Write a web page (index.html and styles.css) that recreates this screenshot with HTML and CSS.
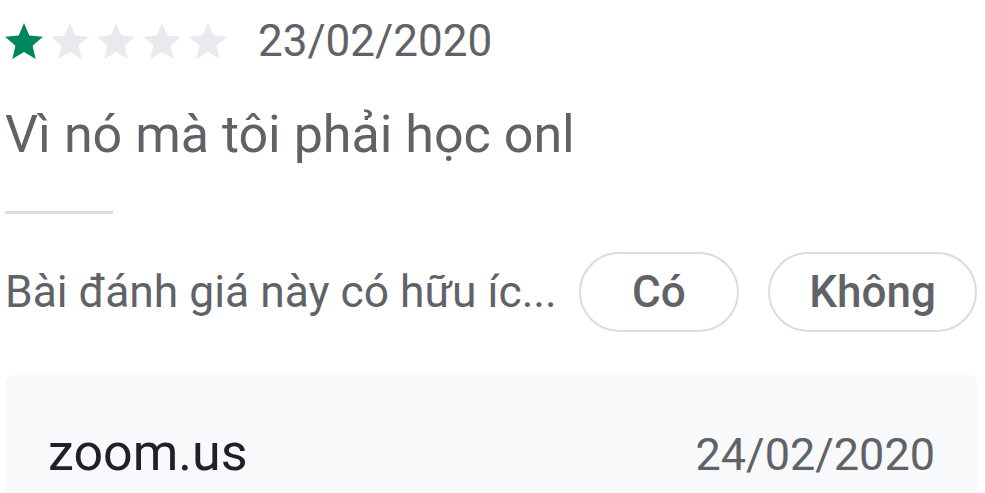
FILE: index.html
```html
<!DOCTYPE html>
<html lang="vi">
<head>
    <meta charset="UTF-8">
    <meta name="viewport" content="width=device-width, initial-scale=1.0">
    <title>Đánh giá</title>
    <link rel="stylesheet" href="styles.css">
</head>
<body>
    <div class="review">
        <div class="review-meta">
            <div class="stars">
                <svg class="star star-on" viewBox="2 2 20 19"><path d="M12 17.27L18.18 21l-1.64-7.03L22 9.24l-7.19-.61L12 2 9.19 8.63 2 9.24l5.46 4.73L5.82 21z"/></svg>
                <svg class="star" viewBox="2 2 20 19"><path d="M12 17.27L18.18 21l-1.64-7.03L22 9.24l-7.19-.61L12 2 9.19 8.63 2 9.24l5.46 4.73L5.82 21z"/></svg>
                <svg class="star" viewBox="2 2 20 19"><path d="M12 17.27L18.18 21l-1.64-7.03L22 9.24l-7.19-.61L12 2 9.19 8.63 2 9.24l5.46 4.73L5.82 21z"/></svg>
                <svg class="star" viewBox="2 2 20 19"><path d="M12 17.27L18.18 21l-1.64-7.03L22 9.24l-7.19-.61L12 2 9.19 8.63 2 9.24l5.46 4.73L5.82 21z"/></svg>
                <svg class="star" viewBox="2 2 20 19"><path d="M12 17.27L18.18 21l-1.64-7.03L22 9.24l-7.19-.61L12 2 9.19 8.63 2 9.24l5.46 4.73L5.82 21z"/></svg>
            </div>
            <span class="review-date">23/02/2020</span>
        </div>

        <p class="review-text">Vì nó mà tôi phải học onl</p>

        <div class="divider"></div>

        <div class="helpful">
            <span class="helpful-label">Bài đánh giá này có hữu íc...</span>
            <button type="button" class="chip chip-yes">Có</button>
            <button type="button" class="chip chip-no">Không</button>
        </div>

        <div class="reply">
            <div class="reply-head">
                <span class="reply-author">zoom.us</span>
                <span class="reply-date">24/02/2020</span>
            </div>
        </div>
    </div>
</body>
</html>
```

FILE: styles.css
```css
:root {
    --text-color: #5f6368;
    --title-color: #202124;
    --star-on: #01875f;
    --star-off: #e8eaed;
    --border-color: #dadce0;
    --card-bg: #f8f9fa;
}

* {
    margin: 0;
    padding: 0;
    box-sizing: border-box;
}

body {
    font-family: Roboto, "Noto Sans", Arial, sans-serif;
    color: var(--text-color);
    background-color: #fff;
}

.review {
    padding: 15px 8px 0 5px;
}

.review-meta {
    display: flex;
    align-items: center;
    height: 52px;
}

.stars {
    display: flex;
    gap: 8px;
}

.star {
    width: 38px;
    height: 36px;
    fill: var(--star-off);
}

.star-on {
    fill: var(--star-on);
}

.review-date {
    margin-left: 31px;
    font-size: 44px;
    line-height: 52px;
}

.review-text {
    margin-top: 36px;
    font-size: 52px;
    line-height: 64px;
}

.divider {
    width: 108px;
    height: 3px;
    margin-top: 44px;
    background-color: var(--border-color);
}

.helpful {
    display: flex;
    align-items: center;
    margin-top: 38px;
}

.helpful-label {
    font-size: 44.4px;
    white-space: nowrap;
}

.chip {
    height: 80px;
    border: 2px solid var(--border-color);
    border-radius: 40px;
    background: #fff;
    font-family: inherit;
    font-size: 44px;
    font-weight: 500;
    color: var(--text-color);
}

.chip-yes {
    width: 161px;
    margin-left: 22px;
}

.chip-no {
    width: 210px;
    margin-left: 29px;
}

.reply {
    margin-top: 43px;
    height: 140px;
    background-color: var(--card-bg);
    border-radius: 8px 8px 0 0;
    padding: 47px 42px 0 43px;
}

.reply-head {
    display: flex;
    justify-content: space-between;
    align-items: baseline;
}

.reply-author {
    font-size: 52px;
    color: var(--title-color);
}

.reply-date {
    font-size: 45px;
}
```
